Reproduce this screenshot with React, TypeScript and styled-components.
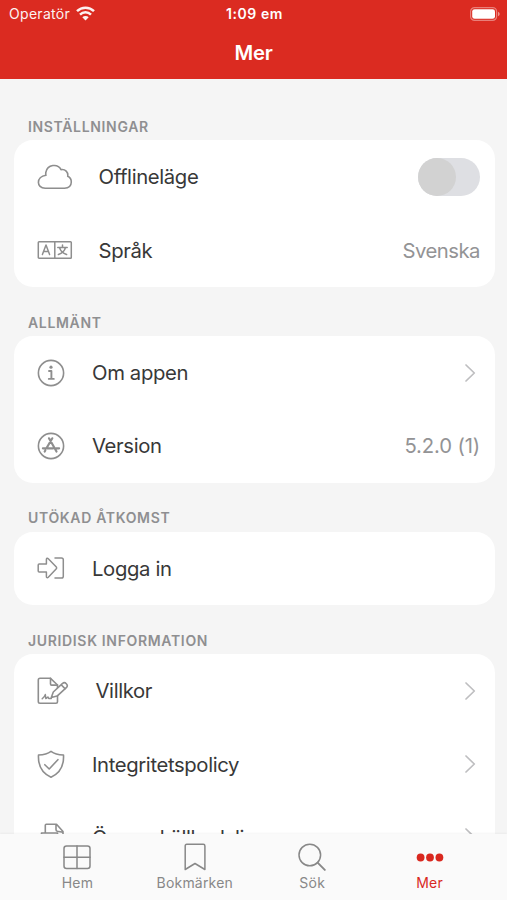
import React from "react";
import styled, { createGlobalStyle } from "styled-components";

const Global = createGlobalStyle`
  * { box-sizing: border-box; }
  html, body { margin: 0; padding: 0; }
  body { font-family: Inter, "Liberation Sans", sans-serif; background: #f5f5f5; overflow: hidden; }
`;

const Screen = styled.div`
  width: 507px;
  height: 900px;
  display: flex;
  flex-direction: column;
  background: #f5f5f5;
  overflow: hidden;
`;

const Header = styled.header`
  flex: none;
  height: 79px;
  background: #db2b21;
  color: #fff;
`;

const StatusBar = styled.div`
  height: 27px;
  display: grid;
  grid-template-columns: 1fr auto 1fr;
  align-items: center;
  padding: 0 7px 0 9px;
  font-size: 14px;
  line-height: 27px;
`;

const Carrier = styled.div`
  display: flex;
  align-items: center;
  gap: 5.5px;
  opacity: 0.94;
  letter-spacing: 0.3px;
`;

const Clock = styled.div`
  font-weight: 600;
  font-size: 14px;
  letter-spacing: 0.55px;
`;

const Battery = styled.div`
  display: flex;
  justify-content: flex-end;
`;

const Title = styled.h1`
  margin: 0;
  text-align: center;
  font-size: 20.3px;
  font-weight: 600;
  line-height: 51px;
  letter-spacing: -0.3px;
`;

const Content = styled.main`
  flex: 1;
  min-height: 0;
  overflow: hidden;
  padding: 12px 12.5px 0 13.5px;
`;

const SectionTitle = styled.h2`
  margin: 0;
  height: 49.2px;
  padding: 26.8px 0 0 14.5px;
  font-size: 14px;
  line-height: 18px;
  font-weight: 600;
  color: #8f8f91;
  letter-spacing: 0.66px;
`;

const Card = styled.section`
  background: #fff;
  border-radius: 19px;
`;

const Row = styled.div`
  height: 73.3px;
  display: flex;
  align-items: center;
  padding: 0 14.5px 0 23.5px;
`;

const Gray = styled.span<{ $width?: number }>`
  flex: none;
  width: ${(p) => p.$width ?? 55}px;
  display: flex;
  align-items: center;
  color: #8e8e8e;
`;

const Label = styled.span`
  flex: 1;
  white-space: nowrap;
  font-size: 20.3px;
  color: #383838;
  letter-spacing: -0.37px;
`;

const Value = styled.span<{ $spacing?: number }>`
  font-size: 20.3px;
  color: #939395;
  letter-spacing: ${(p) => p.$spacing ?? -0.5}px;
`;

const Switch = styled.span`
  width: 62.5px;
  height: 38px;
  border-radius: 19px;
  background: #dedfe3;
  display: flex;
`;

const Knob = styled.span`
  width: 38px;
  height: 38px;
  border-radius: 50%;
  background: #d2d2d2;
`;

const TabBar = styled.nav`
  flex: none;
  height: 66px;
  display: grid;
  grid-template-columns: repeat(4, 117.4px);
  justify-content: center;
  background: #fafafa;
  box-shadow: 0 -1px 2px rgba(0, 0, 0, 0.045);
  z-index: 1;
`;

const Tab = styled.div<{ $active?: boolean }>`
  display: flex;
  flex-direction: column;
  align-items: center;
  padding-top: 7px;
  color: ${(p) => (p.$active ? "#d9281f" : "#888888")};
  font-size: 14px;
  line-height: 19px;
  letter-spacing: 0.2px;
  svg { height: 32px; }
`;

const Stroke = ({ w, h, children, sw = 1.6 }: { w: number; h: number; children: React.ReactNode; sw?: number }) => (
  <svg width={w} height={h} viewBox={`0 0 ${w} ${h}`} fill="none" stroke="currentColor" strokeWidth={sw} strokeLinejoin="round" strokeLinecap="round">
    {children}
  </svg>
);

const Wifi = () => (
  <svg width="19" height="15" viewBox="0 0 19 15" fill="none" stroke="#fff" strokeWidth="2.5">
    <path d="M1 5.2a12.2 12.2 0 0 1 17 0M4 8.6a7.8 7.8 0 0 1 11 0" />
    <path d="M9.5 14.4 6.3 11.2a4.6 4.6 0 0 1 6.4 0Z" fill="#fff" stroke="none" />
  </svg>
);

const BatteryIcon = () => (
  <svg width="30" height="14" viewBox="0 0 30 14">
    <rect x="0.6" y="0.6" width="26" height="12.8" rx="4" fill="none" stroke="#fff" strokeOpacity="0.4" strokeWidth="1.2" />
    <rect x="2.2" y="2.2" width="22.8" height="9.6" rx="2.4" fill="#fff" />
    <path d="M28 4.8c2.2.8 2.2 3.6 0 4.4Z" fill="#fff" fillOpacity="0.5" />
  </svg>
);

const Cloud = () => (
  <Stroke w={36} h={26}>
    <path d="M8.200 24.200H27.500C32 24.200 34.300 21.300 34.300 18c0-2.700-1.400-4.700-3.600-5.700.7-4.200-2.500-7.400-6.700-6.700C20.800-.8 10.400.4 8.900 8.200c-.2 1-.2 2.100 0 3.100C-1 12.700-.9 24.200 8.200 24.200Z" />
  </Stroke>
);

const Language = () => (
  <Stroke w={36} h={20} sw={1.5}>
    <rect x="1.300" y="1.800" width="33" height="16.400" rx="0.800" />
    <path d="M17.800 2v16M5.400 14.500 9 5l3.600 9.500M6.600 11.400h4.800M20.800 7.400h9.400M25.500 5v2M22.600 7.800c.8 3 3.400 5.600 7 6.700M28.400 7.800c-.8 3-3.400 5.600-7 6.700" />
  </Stroke>
);

const Info = () => (
  <Stroke w={28} h={28}>
    <circle cx="14" cy="14" r="12.600" />
    <circle cx="14" cy="8.200" r="1.600" fill="currentColor" stroke="none" />
    <path d="M12 12h2.400v7.600M11.800 19.900h5" strokeWidth="1.900" />
  </Stroke>
);

const AppStore = () => (
  <Stroke w={28} h={28}>
    <circle cx="14" cy="14" r="12.600" />
    <path d="m12 6.300 7.500 13.200M15.300 6.300 9.600 16M8.300 18.500l-.6 1M5.900 16.300h10.200M19 16.300h3.100" strokeWidth="2.200" />
  </Stroke>
);

const Login = () => (
  <Stroke w={28} h={24} sw={1.500}>
    <path d="M2.200 8h7.200V3.500c0-1.300 1-1.700 1.900-.8l7.800 8.100c.7.700.7 1.500 0 2.200l-7.800 8.200c-.9.900-1.900.5-1.900-.8V16H2.200c-.7 0-1-.4-1-1V9c0-.7.300-1 1-1Z" />
    <path d="M18 2h6.500c1.300 0 1.800.6 1.800 1.800v16.400c0 1.200-.5 1.800-1.800 1.800H18" />
  </Stroke>
);

const Terms = () => (
  <Stroke w={32} h={28}>
    <path d="M20.500 18.500v6.300c0 1-.5 1.500-1.500 1.500H3c-1 0-1.700-.7-1.700-1.700V3c0-1 .7-1.700 1.700-1.700h10.500l7 6.700v2.500" />
    <path d="M13.500 1.300V7c0 .7.400 1.100 1.100 1.100h5.900" />
    <path d="m14.300 20.600 2-5.600 9-8.300a2.700 2.700 0 0 1 4 4l-9.200 8.400ZM24.200 7.700l4 4.200" />
    <path d="M5.200 21.800c1.600-1.500 2.800-3 3.100-4.200.4 1.800.2 3 .6 4 .8-.1 1.400-1.600 2.200-1.600.4.700.3 1.500 1 1.600h2.200" strokeWidth="1.500" />
  </Stroke>
);

const Shield = () => (
  <Stroke w={28} h={30}>
    <path d="M14 2.300c3.200 2.300 7.500 3.400 12.500 3.700.5 9.500-2.100 17.500-12.500 22.200C3.600 23.500 1 15.500 1.500 6c5-.3 9.300-1.400 12.500-3.700Z" />
    <path d="m7.800 15.700 4.400 4.300 8.700-9.300" />
  </Stroke>
);

const Documents = () => (
  <Stroke w={28} h={28}>
    <path d="M8.300 10V2.300c0-.7.400-1 1-1h10.200l6.500 7.200v13h-5M19 1.500v5c0 .9.400 1.500 1.300 1.700l5.500 1M8.300 10H4.500v16.500h16V10Z" />
  </Stroke>
);

const ChevronSlot = styled.span`
  flex: none;
  display: flex;
  color: #bebec0;
  margin-right: 4px;
`;

const Chevron = () => (
  <ChevronSlot>
    <Stroke w={12} h={20} sw={1.700}>
      <path d="m2 2 8.300 8-8.300 8" />
    </Stroke>
  </ChevronSlot>
);

const GridIcon = () => (
  <Stroke w={28} h={32} sw={1.500}>
    <rect x="1" y="5" width="26" height="22.500" rx="2.500" />
    <path d="M14 5v22.500M1 16.300h26" />
  </Stroke>
);

const BookmarkIcon = () => (
  <Stroke w={28} h={32} sw={1.500}>
    <path d="M4.200 5c0-1.100.5-1.700 1.600-1.700h16.500c1.100 0 1.600.6 1.600 1.700v23.500l-9.900-6-9.800 6Z" />
  </Stroke>
);

const SearchIcon = () => (
  <Stroke w={28} h={32} sw={1.500}>
    <circle cx="11.800" cy="14" r="10.800" />
    <path d="m19.600 21.700 7.200 7.200" strokeWidth="1.900" />
  </Stroke>
);

const DotsIcon = () => (
  <svg width="28" height="32" viewBox="0 0 28 32" fill="currentColor">
    <circle cx="4.600" cy="16.500" r="3.900" />
    <circle cx="14" cy="16.500" r="3.900" />
    <circle cx="23.400" cy="16.500" r="3.900" />
  </svg>
);

export default function App() {
  return (
    <>
      <Global />
      <Screen>
        <Header>
          <StatusBar>
            <Carrier>Operatör <Wifi /></Carrier>
            <Clock>1:09 em</Clock>
            <Battery><BatteryIcon /></Battery>
          </StatusBar>
          <Title>Mer</Title>
        </Header>
        <Content>
          <SectionTitle>INSTÄLLNINGAR</SectionTitle>
          <Card>
            <Row>
              <Gray $width={61.5}><Cloud /></Gray>
              <Label>Offlineläge</Label>
              <Switch><Knob /></Switch>
            </Row>
            <Row>
              <Gray $width={61.5}><Language /></Gray>
              <Label>Språk</Label>
              <Value>Svenska</Value>
            </Row>
          </Card>
          <SectionTitle>ALLMÄNT</SectionTitle>
          <Card>
            <Row>
              <Gray><Info /></Gray>
              <Label>Om appen</Label>
              <Chevron />
            </Row>
            <Row>
              <Gray><AppStore /></Gray>
              <Label>Version</Label>
              <Value $spacing={-0.15}>5.2.0 (1)</Value>
            </Row>
          </Card>
          <SectionTitle>UTÖKAD ÅTKOMST</SectionTitle>
          <Card>
            <Row>
              <Gray><Login /></Gray>
              <Label>Logga in</Label>
            </Row>
          </Card>
          <SectionTitle>JURIDISK INFORMATION</SectionTitle>
          <Card>
            <Row>
              <Gray $width={58.5}><Terms /></Gray>
              <Label>Villkor</Label>
              <Chevron />
            </Row>
            <Row>
              <Gray><Shield /></Gray>
              <Label>Integritetspolicy</Label>
              <Chevron />
            </Row>
            <Row>
              <Gray><Documents /></Gray>
              <Label>Öppen källkodslicenser</Label>
              <Chevron />
            </Row>
          </Card>
        </Content>
        <TabBar>
          <Tab><GridIcon />Hem</Tab>
          <Tab><BookmarkIcon />Bokmärken</Tab>
          <Tab><SearchIcon />Sök</Tab>
          <Tab $active><DotsIcon />Mer</Tab>
        </TabBar>
      </Screen>
    </>
  );
}
